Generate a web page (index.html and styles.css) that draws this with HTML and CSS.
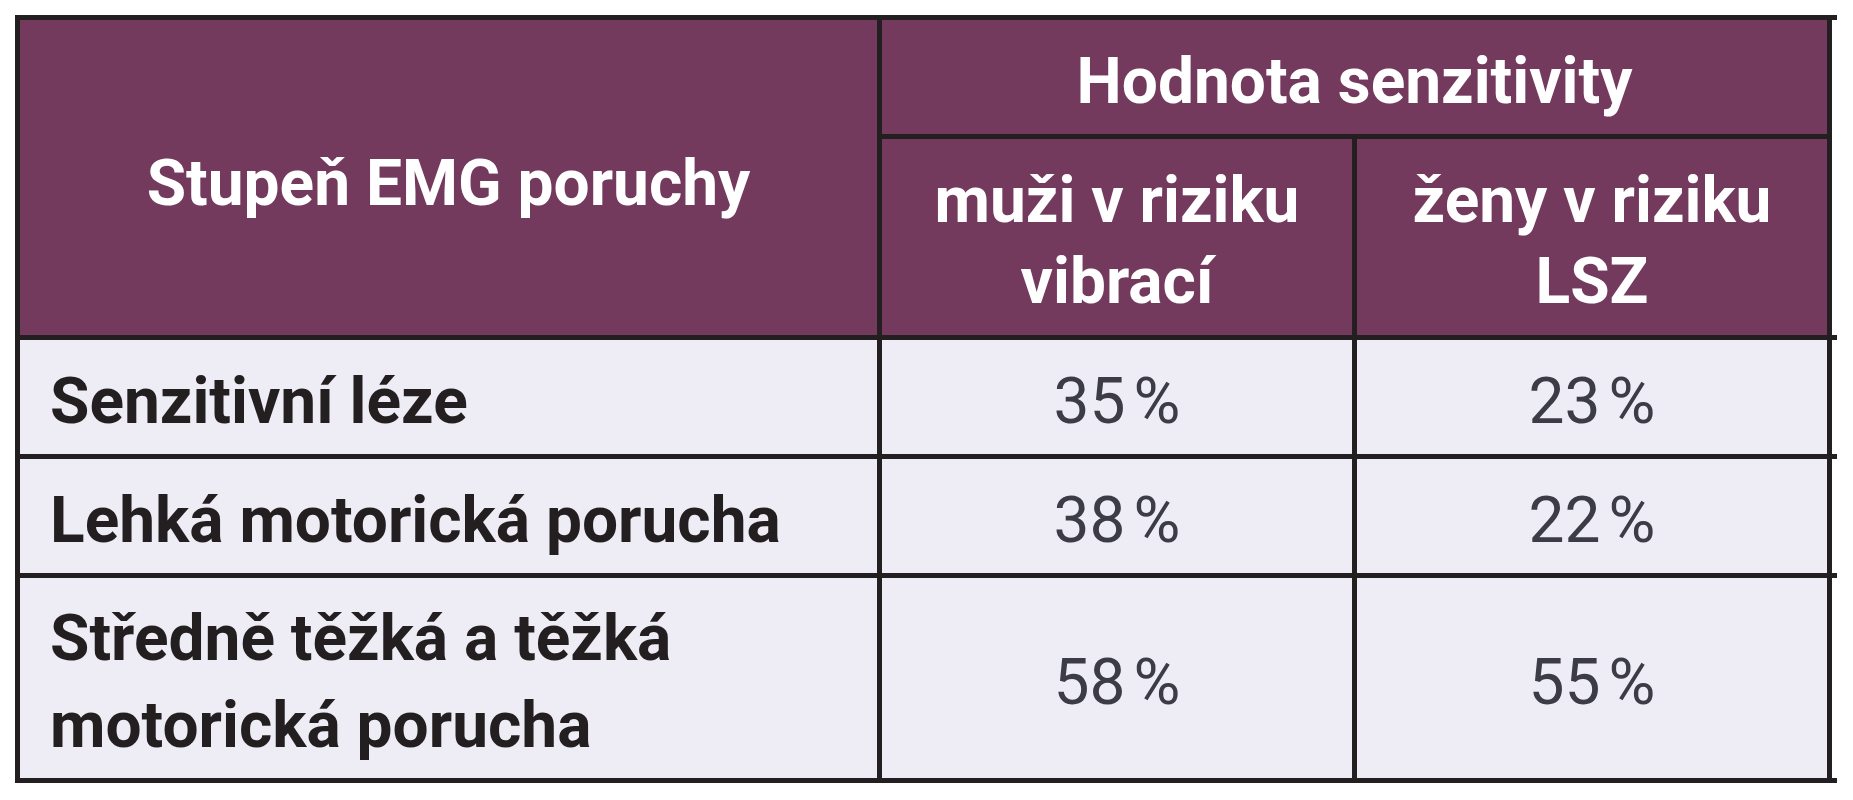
FILE: index.html
```html
<!DOCTYPE html>
<html lang="cs">
<head>
<meta charset="utf-8">
<title>Hodnota senzitivity</title>
<link rel="stylesheet" href="styles.css">
</head>
<body>
<div class="page">
  <div class="table">
    <div class="cell head h-stage">Stupeň EMG poruchy</div>
    <div class="cell head h-group top-last">Hodnota senzitivity</div>
    <div class="cell head h-sub">muži v riziku<br>vibrací</div>
    <div class="cell head h-sub last">ženy v riziku<br>LSZ</div>

    <div class="cell label">Senzitivní léze</div>
    <div class="cell num">35 %</div>
    <div class="cell num last">23 %</div>

    <div class="cell label">Lehká motorická porucha</div>
    <div class="cell num">38 %</div>
    <div class="cell num last">22 %</div>

    <div class="cell label">Středně těžká a těžká<br>motorická porucha</div>
    <div class="cell num">58 %</div>
    <div class="cell num last">55 %</div>
  </div>
</div>
</body>
</html>
```

FILE: styles.css
```css
html, body {
  margin: 0;
  padding: 0;
  background: #ffffff;
}

.page {
  padding: 15px 0 0 15px;
  font-family: Roboto, "Liberation Sans", Arial, sans-serif;
}

.table {
  display: grid;
  grid-template-columns: 857px 470px 470px;
  grid-template-rows: 114px 196px 114px 114px 200px;
  gap: 5px;
  padding: 5px;
  width: max-content;
  background: #231f20;
}

.cell {
  position: relative;
  display: flex;
  align-items: center;
  box-sizing: border-box;
  padding-top: 8px;
  background: #eeedf5;
  font-size: 64px;
  line-height: 87px;
  white-space: nowrap;
}

.head {
  background: #733a5e;
  color: #ffffff;
  font-weight: 700;
  justify-content: center;
  text-align: center;
  line-height: 81px;
}

.h-stage {
  grid-row: 1 / 3;
  padding-top: 12px;
}

.h-group {
  grid-column: 2 / 4;
}

.label {
  justify-content: flex-start;
  padding-left: 30px;
  color: #231f20;
  font-weight: 700;
}

.num {
  justify-content: center;
  color: #3c3c46;
  font-weight: 400;
  word-spacing: -0.12em;
}

/* horizontal rules run slightly past the right frame */
.last::after,
.top-last::before {
  content: "";
  position: absolute;
  right: -10px;
  width: 5px;
  height: 5px;
  background: #231f20;
}

.last::after {
  bottom: -5px;
}

.top-last::before {
  top: -5px;
}
```
